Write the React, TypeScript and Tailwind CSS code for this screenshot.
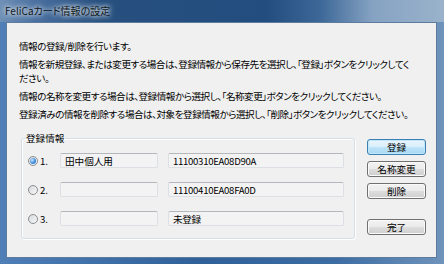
const FONT = "[font-family:'Noto_Sans_CJK_JP','Noto_Sans',sans-serif] [font-feature-settings:'palt']";

const ROWS = [
  { no: "1.", name: "田中個人用", id: "11100310EA08D90A", checked: true },
  { no: "2.", name: "", id: "11100410EA08FA0D", checked: false },
  { no: "3.", name: "", id: "未登録", checked: false },
];

function Radio({ checked }: { checked: boolean }) {
  return (
    <span className="w-[10px] h-[10px] shrink-0 rounded-full border border-[#8c8e91] bg-[linear-gradient(135deg,#d6d8db,#f7f8f9)] flex items-center justify-center">
      {checked && (
        <span className="w-[6px] h-[6px] rounded-full bg-[radial-gradient(circle_at_35%_35%,#c9e8ff_0%,#3d8fe0_55%,#1b5fb0_100%)]" />
      )}
    </span>
  );
}

function Field({ width, children }: { width: string; children?: React.ReactNode }) {
  return (
    <div
      className={`${width} h-[15px] shrink-0 flex items-center pl-[4px] bg-[#f3f3f3] border border-[#dcdfe3] border-t-[#b4b7bb] rounded-[2px] whitespace-nowrap`}
    >
      {children}
    </div>
  );
}

function Button({ label, primary }: { label: string; primary?: boolean }) {
  return (
    <button
      className={
        primary
          ? "w-[59px] h-[16px] flex items-center justify-center rounded-[3px] border border-[#3c7fb1] bg-[linear-gradient(#e9f5fd_0%,#d9eefb_50%,#bee4f8_51%,#a8d8f4_100%)] shadow-[inset_0_0_0_1px_#bfe6fb]"
          : "w-[59px] h-[16px] flex items-center justify-center rounded-[3px] border border-[#707070] bg-[linear-gradient(#f2f2f2_0%,#ebebeb_50%,#dddddd_51%,#cfcfcf_100%)] shadow-[inset_0_0_0_1px_#fafafa]"
      }
    >
      {label}
    </button>
  );
}

export default function App() {
  return (
    <div className={`w-[444px] h-[264px] flex flex-col bg-[linear-gradient(90deg,#4f7fb6_0%,#2f6098_45%,#3b6ca2_75%,#6f93bb_100%)] text-black ${FONT}`}>
      <div className="h-[22px] shrink-0 flex items-center pl-[5px] bg-[linear-gradient(90deg,#6f90b6_0%,#4a70a0_8%,#27507f_22%,#234d7e_60%,#3c6797_72%,#86a3c3_84%,#9ab2cb_100%)]">
        <span className="text-[10px] leading-[14px] text-[#101820] [text-shadow:0_0_4px_#fff,0_0_7px_#e8eef5]">
          FeliCaカード情報の設定
        </span>
      </div>

      <div className="flex-1 ml-[6px] mr-[7px] mb-[6px] bg-[#f0f0f0] border border-[#5d7b9e] pl-[12px] pt-[16px] text-[9.6px] leading-[14px]">
        <div className="tracking-[-0.5px]">
          <p>情報の登録/削除を行います。</p>
          <p className="mt-[4px] whitespace-nowrap">
            情報を新規登録、または変更する場合は、登録情報から保存先を選択し、「登録」ボタンをクリックしてく
            <br />
            ださい。
          </p>
          <p className="mt-[4px] whitespace-nowrap">
            情報の名称を変更する場合は、登録情報から選択し、「名称変更」ボタンをクリックしてください。
          </p>
          <p className="mt-[4px] whitespace-nowrap">
            登録済みの情報を削除する場合は、対象を登録情報から選択し、「削除」ボタンをクリックしてください。
          </p>
        </div>

        <div className="mt-[10px] flex items-start">
          <fieldset className="ml-[2px] w-[334px] border border-[#d5dfe5] rounded-[3px] px-[6px] pt-[8px] pb-[12px] shadow-[inset_1px_1px_0_#fff,1px_1px_0_#fff]">
            <legend className="-ml-[3px] px-[1px]">登録情報</legend>
            <div className="flex flex-col gap-[14px]">
              {ROWS.map((r) => (
                <div key={r.no} className="flex items-center">
                  <Radio checked={r.checked} />
                  <span className="ml-[2px] w-[20px] shrink-0">{r.no}</span>
                  <Field width="w-[98px]">{r.name}</Field>
                  <div className="ml-[10px]">
                    <Field width="w-[176px]">
                      <span className="tracking-[-0.3px]">{r.id}</span>
                    </Field>
                  </div>
                </div>
              ))}
            </div>
          </fieldset>

          <div className="ml-[12px] pt-[8px] flex flex-col">
            <div className="flex flex-col gap-[6px]">
              <Button label="登録" primary />
              <Button label="名称変更" />
              <Button label="削除" />
            </div>
            <div className="mt-[20px]">
              <Button label="完了" />
            </div>
          </div>
        </div>
      </div>
    </div>
  );
}
